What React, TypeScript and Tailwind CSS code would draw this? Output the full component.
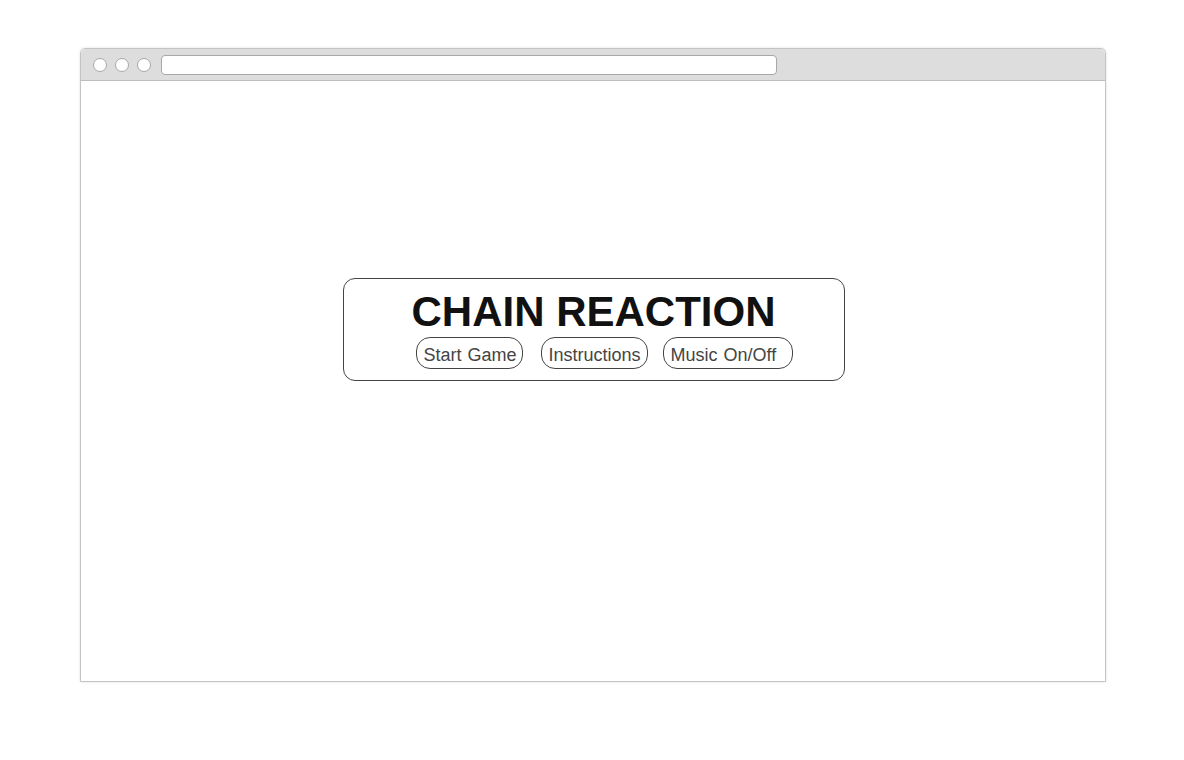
const font = { fontFamily: '"Liberation Sans", Arial, sans-serif' };

const MenuButton = ({ label, className = '' }: { label: string; className?: string }) => (
  <button
    className={`h-[32px] rounded-[14px] border border-[#444] bg-white pl-[7px] pt-[4px] text-left text-[18px] leading-[26px] text-[#444] [word-spacing:1px] ${className}`}
  >
    {label}
  </button>
);

export default function App() {
  return (
    <div className="h-[760px] w-[1184px] bg-white pl-[80px] pt-[48px]" style={font}>
      {/* Browser frame */}
      <div className="flex h-[634px] w-[1026px] flex-col rounded-t-[5px] border border-[#c4c4c4] shadow-[0_0_3px_rgba(0,0,0,0.12)]">
        {/* Title bar */}
        <div className="flex h-[32px] items-center rounded-t-[5px] border-b border-[#bdbdbd] bg-[#dddddd] pl-[12px]">
          <span className="h-[14px] w-[14px] rounded-full border border-[#a8a8a8] bg-white" />
          <span className="ml-[8px] h-[14px] w-[14px] rounded-full border border-[#a8a8a8] bg-white" />
          <span className="ml-[8px] h-[14px] w-[14px] rounded-full border border-[#a8a8a8] bg-white" />
          <div className="ml-[10px] h-[20px] w-[616px] rounded-[4px] border border-[#a8a8a8] bg-white" />
        </div>

        {/* Page content */}
        <div className="flex flex-1 justify-center bg-white pl-[1px] pt-[197px]">
          <div className="h-[103px] w-[502px] rounded-[12px] border border-[#444]">
            <h1 className="mt-[12px] text-center text-[42px] font-bold leading-[42px] text-[#111]">
              CHAIN REACTION
            </h1>
            <div className="mt-[4px] flex pl-[72px]">
              <MenuButton label="Start Game" className="w-[107px]" />
              <MenuButton label="Instructions" className="ml-[18px] w-[107px]" />
              <MenuButton label="Music On/Off" className="ml-[15px] w-[130px]" />
            </div>
          </div>
        </div>
      </div>
    </div>
  );
}
